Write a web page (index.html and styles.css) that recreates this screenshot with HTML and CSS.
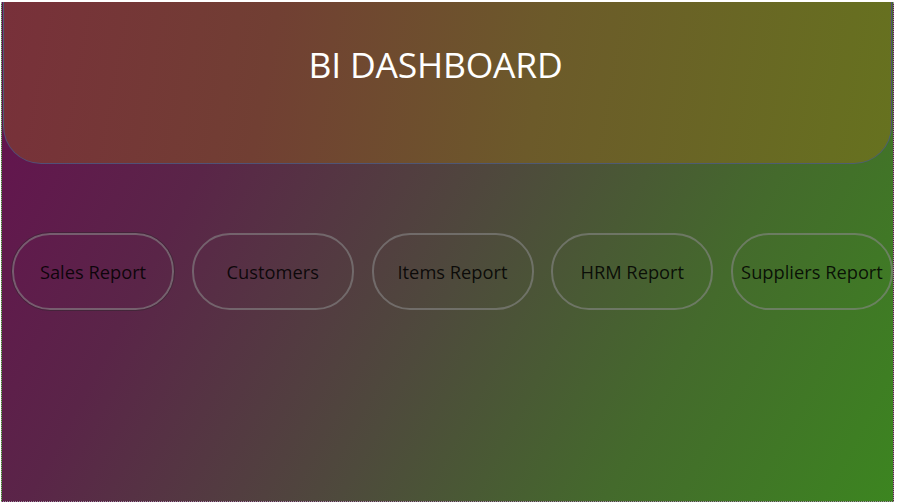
FILE: index.html
```html
<!DOCTYPE html>
<html lang="en">
<head>
<meta charset="utf-8">
<title>BI Dashboard</title>
<link rel="stylesheet" href="styles.css">
</head>
<body>
<div class="canvas">
  <header class="header">
    <h1 class="title">BI DASHBOARD</h1>
  </header>
  <nav class="nav">
    <button class="pill selected">Sales Report</button>
    <button class="pill">Customers</button>
    <button class="pill">Items Report</button>
    <button class="pill">HRM Report</button>
    <button class="pill">Suppliers Report</button>
  </nav>
</div>
</body>
</html>
```
FILE: styles.css
```css
html, body {
  margin: 0;
  padding: 0;
  background: #ffffff;
}
body {
  font-family: "Open Sans", "Noto Sans", "Liberation Sans", sans-serif;
  width: 897px;
  height: 503px;
  overflow: hidden;
}
.canvas {
  box-sizing: border-box;
  margin: 2px 0 0 1px;
  width: 893px;
  height: 500px;
  border-left: 1px dotted #9a9a9a;
  border-right: 1px dotted #9a9a9a;
  border-bottom: 1px dotted #9a9a9a;
  background: linear-gradient(118deg, #661050 0%, #5a2548 25%, #4e4a3c 52%, #446a2c 75%, #3c8520 100%);
  display: flex;
  flex-direction: column;
}
.header {
  box-sizing: border-box;
  margin-left: 1px;
  width: 889px;
  height: 162px;
  border: 1.5px solid rgba(70, 90, 140, 0.75);
  border-top: none;
  border-radius: 0 0 38px 38px;
  background: linear-gradient(100deg, #78303a 0%, #713f33 30%, #6c5a2a 60%, #66721f 100%);
  display: flex;
  justify-content: center;
  padding-right: 24px;
}
.title {
  margin: 0;
  padding-top: 38px;
  font-weight: 400;
  font-size: 35.5px;
  line-height: 48px;
  color: #ffffff;
  letter-spacing: -0.2px;
}
.nav {
  display: flex;
  gap: 17.75px;
  padding: 69px 0 0 10px;
}
.pill {
  box-sizing: border-box;
  width: 162px;
  height: 77px;
  border: 2px solid rgba(135, 135, 135, 0.6);
  border-radius: 38px;
  background: transparent;
  font-family: "Open Sans", "Noto Sans", "Liberation Sans", sans-serif;
  font-size: 18.3px;
  color: rgba(0, 0, 0, 0.86);
  padding: 0;
  white-space: nowrap;
}
.selected {
  outline: 1px solid rgba(40, 40, 40, 0.45);
  outline-offset: 0;
}
```
